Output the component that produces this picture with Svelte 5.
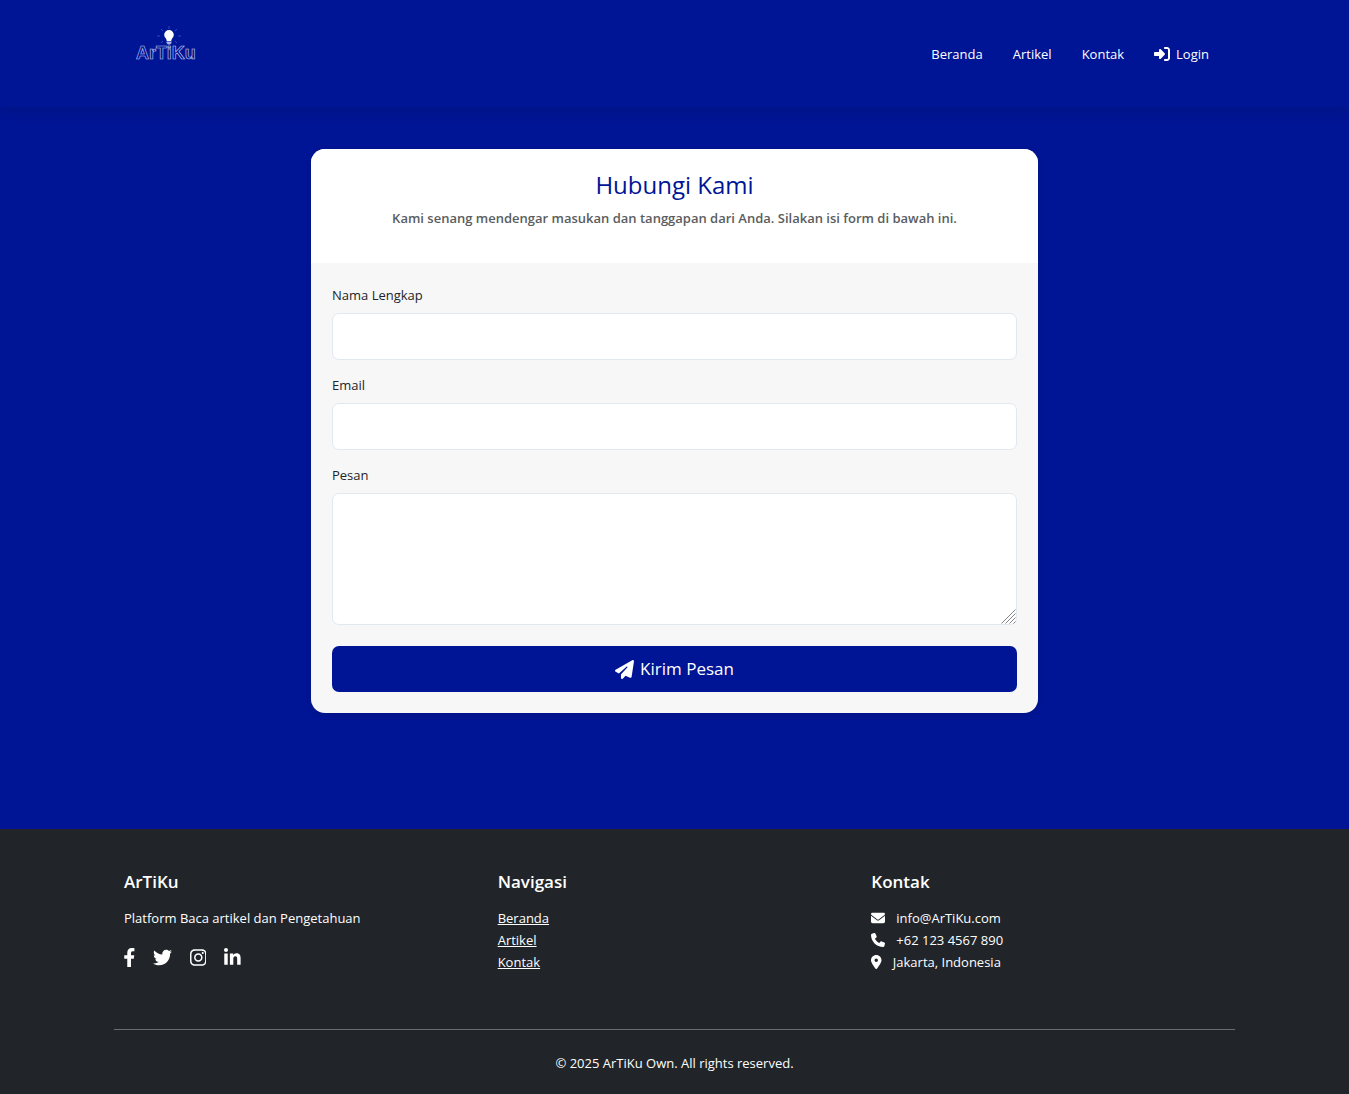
<script>
  const icons = {
    login: { box: '0 0 448 512', d: 'M217.9 105.9L340.7 228.7c7.2 7.2 11.3 17.1 11.3 27.3s-4.1 20.1-11.3 27.3L217.9 406.1c-6.4 6.4-15 9.900-24 9.900c-18.700 0-33.900-15.200-33.900-33.900l0-62.100L32 320c-17.700 0-32-14.300-32-32l0-64c0-17.700 14.300-32 32-32l128 0 0-62.100c0-18.700 15.200-33.900 33.900-33.900c9 0 17.600 3.600 24 9.900zM352 416l64 0c17.700 0 32-14.300 32-32l0-256c0-17.700-14.300-32-32-32l-64 0c-17.700 0-32-14.300-32-32s14.300-32 32-32l64 0c53 0 96 43 96 96l0 256c0 53-43 96-96 96l-64 0c-17.700 0-32-14.300-32-32s14.300-32 32-32z' },
    plane: { box: '0 0 512 512', d: 'M498.1 5.6c10.1 7 15.4 19.1 13.5 31.2l-64 416c-1.5 9.7-7.4 18.2-16 23s-18.9 5.4-28 1.6L284 427.7l-68.5 74.1c-8.9 9.7-22.9 12.9-35.2 8.1S160 493.2 160 480V396.4c0-4 1.5-7.8 4.2-10.7L331.8 202.8c5.8-6.3 5.6-16-.4-22s-15.7-6.4-22-.7L106 360.8 17.7 316.6C7.1 311.3 .3 300.7 0 288.9s5.9-22.8 16.1-28.7l448-256c10.7-6.1 23.9-5.5 34 1.4z' },
    envelope: { box: '0 0 512 512', d: 'M48 64C21.500 64 0 85.500 0 112c0 15.100 7.100 29.300 19.200 38.400L236.800 313.600c11.400 8.500 27 8.500 38.400 0L492.800 150.400c12.100-9.100 19.200-23.300 19.200-38.400c0-26.500-21.500-48-48-48L48 64zM0 176L0 384c0 35.300 28.700 64 64 64l384 0c35.300 0 64-28.700 64-64l0-208L294.400 339.200c-22.800 17.100-54 17.100-76.800 0L0 176z' },
    phone: { box: '0 0 512 512', d: 'M164.9 24.6c-7.700-18.600-28-28.500-47.400-23.200l-88 24C12.100 30.200 0 46 0 64C0 311.400 200.600 512 448 512c18 0 33.800-12.100 38.600-29.500l24-88c5.300-19.400-4.600-39.700-23.200-47.400l-96-40c-16.300-6.800-35.200-2.100-46.300 11.600L304.700 368C234.300 334.700 177.300 277.700 144 207.300L193.300 167c13.700-11.200 18.400-30 11.600-46.300l-40-96z' },
    pin: { box: '0 0 384 512', d: 'M215.7 499.200C267 435 384 279.400 384 192C384 86 298 0 192 0S0 86 0 192c0 87.400 117 243 168.300 307.200c12.300 15.300 35.100 15.300 47.400 0zM192 128a64 64 0 1 1 0 128 64 64 0 1 1 0-128z' }
  };

  const social = [
    { name: 'Facebook', box: '16 0 288 512', d: 'M279.14 288l14.22-92.66h-88.91v-60.13c0-25.35 12.42-50.06 52.24-50.06h40.42V6.26S260.43 0 225.36 0c-73.22 0-121.08 44.38-121.08 124.72v70.62H22.89V288h81.39v224h100.170V288z' },
    { name: 'Twitter', box: '0 0 512 512', d: 'M459.370 151.716c.325 4.548.325 9.097.325 13.645 0 138.720-105.583 298.558-298.558 298.558-59.452 0-114.680-17.219-161.137-47.106 8.447.974 16.568 1.299 25.340 1.299 49.055 0 94.213-16.568 130.274-44.832-46.132-.975-84.792-31.188-98.112-72.772 6.498.974 12.995 1.624 19.818 1.624 9.421 0 18.843-1.300 27.614-3.573-48.081-9.747-84.143-51.980-84.143-102.985v-1.299c13.969 7.797 30.214 12.670 47.431 13.319-28.264-18.843-46.781-51.005-46.781-87.391 0-19.492 5.197-37.360 14.294-52.954 51.655 63.675 129.300 105.258 216.365 109.807-1.624-7.797-2.599-15.918-2.599-24.040 0-57.828 46.782-104.934 104.934-104.934 30.213 0 57.502 12.670 76.670 33.137 23.715-4.548 46.456-13.320 66.599-25.340-7.798 24.366-24.366 44.833-46.132 57.827 21.117-2.273 41.584-8.122 60.426-16.243-14.292 20.791-32.161 39.308-52.628 54.253z' },
    { name: 'Instagram', box: '0 0 448 512', d: 'M224.100 141c-63.600 0-114.900 51.300-114.900 114.900s51.300 114.900 114.900 114.900S339 319.500 339 255.900 287.700 141 224.100 141zm0 189.600c-41.100 0-74.700-33.500-74.700-74.700s33.500-74.700 74.700-74.700 74.700 33.500 74.700 74.700-33.600 74.700-74.700 74.700zm146.400-194.300c0 14.900-12 26.800-26.800 26.800-14.900 0-26.800-12-26.800-26.800s12-26.800 26.800-26.800 26.800 12 26.800 26.800zm76.100 27.200c-1.700-35.900-9.900-67.700-36.200-93.900-26.200-26.200-58-34.400-93.900-36.200-37-2.100-147.900-2.100-184.900 0-35.800 1.700-67.600 9.900-93.900 36.100s-34.400 58-36.200 93.900c-2.100 37-2.100 147.900 0 184.900 1.700 35.900 9.900 67.700 36.200 93.900s58 34.400 93.900 36.200c37 2.100 147.900 2.100 184.900 0 35.900-1.700 67.700-9.900 93.900-36.200 26.200-26.200 34.400-58 36.200-93.900 2.100-37 2.100-147.800 0-184.800zM398.800 388c-7.800 19.600-22.900 34.700-42.600 42.600-29.500 11.700-99.500 9-132.100 9s-102.700 2.600-132.100-9c-19.600-7.800-34.700-22.900-42.600-42.600-11.700-29.500-9-99.500-9-132.100s-2.600-102.700 9-132.100c7.800-19.600 22.900-34.700 42.600-42.600 29.500-11.700 99.500-9 132.100-9s102.700-2.600 132.100 9c19.600 7.800 34.700 22.900 42.600 42.600 11.700 29.500 9 99.500 9 132.100s2.700 102.700-9 132.100z' },
    { name: 'LinkedIn', box: '0 0 448 512', d: 'M100.280 448H7.400V148.900h92.880zM53.790 108.100C24.090 108.100 0 83.500 0 53.800a53.790 53.790 0 0 1 107.580 0c0 29.700-24.100 54.300-53.790 54.300zM447.900 448h-92.680V302.400c0-34.700-.7-79.200-48.290-79.200-48.290 0-55.690 37.700-55.690 76.700V448h-92.780V148.900h89.080v40.800h1.300c12.400-23.500 42.690-48.300 87.880-48.300 94 0 111.280 61.900 111.280 142.300V448z' }
  ];

  const links = ['Beranda', 'Artikel', 'Kontak'];
  const contacts = [
    { icon: 'envelope', text: 'info@ArTiKu.com' },
    { icon: 'phone', text: '+62 123 4567 890' },
    { icon: 'pin', text: 'Jakarta, Indonesia' }
  ];
</script>

{#snippet glyph(icon)}
  <svg class="icon" viewBox={icon.box} aria-hidden="true"><path d={icon.d} /></svg>
{/snippet}

<header>
  <div class="container bar">
    <a class="brand" href="#beranda" aria-label="ArTiKu">
      <svg viewBox="0 0 64 38" aria-hidden="true">
        <g class="rays">
          <path d="M36 3V0M30 5l-2-2M42 5l2-2M27 10h-3M45 10h3M30 15l-2 2M42 15l2 2" />
        </g>
        <path class="bulb" d="M36 4a4.800 4.800 0 0 0-4.800 4.800c0 2 1.200 3 2 4.300l.6 2h4.400l.6-2c.8-1.300 2-2.300 2-4.300A4.800 4.800 0 0 0 36 4z" />
        <path class="base" d="M33.500 15.500h5v1.500l-1.500 1.500h-2l-1.500-1.500z" />
        <text x="3" y="33">ArTiKu</text>
      </svg>
    </a>
    <nav aria-label="Utama">
      {#each links as link}
        <a href={`#${link.toLowerCase()}`}>{link}</a>
      {/each}
      <a class="login" href="#login">{@render glyph(icons.login)}Login</a>
    </nav>
  </div>
</header>

<main>
  <section class="card">
    <div class="card-head">
      <h1>Hubungi Kami</h1>
      <p>Kami senang mendengar masukan dan tanggapan dari Anda. Silakan isi form di bawah ini.</p>
    </div>
    <form onsubmit={(e) => e.preventDefault()}>
      <div class="field">
        <label for="name">Nama Lengkap</label>
        <input id="name" type="text" />
      </div>
      <div class="field">
        <label for="email">Email</label>
        <input id="email" type="email" />
      </div>
      <div class="field">
        <label for="message">Pesan</label>
        <div class="area">
          <textarea id="message"></textarea>
          <svg class="grip" viewBox="0 0 15 15" aria-hidden="true">
            <path d="M.5 14.500l14-14M4.500 14.500l10-10M8.500 14.500l6-6M12.500 14.500l2-2" />
          </svg>
        </div>
      </div>
      <button type="submit">{@render glyph(icons.plane)}Kirim Pesan</button>
    </form>
  </section>
</main>

<footer>
  <div class="container">
    <div class="columns">
      <div>
        <h2>ArTiKu</h2>
        <p>Platform Baca artikel dan Pengetahuan</p>
        <div class="social">
          {#each social as item}
            <a href={`#${item.name.toLowerCase()}`} aria-label={item.name}>{@render glyph(item)}</a>
          {/each}
        </div>
      </div>
      <div>
        <h2>Navigasi</h2>
        <ul>
          {#each links as link}
            <li><a href={`#${link.toLowerCase()}`}>{link}</a></li>
          {/each}
        </ul>
      </div>
      <div>
        <h2>Kontak</h2>
        <ul>
          {#each contacts as item}
            <li class="contact">{@render glyph(icons[item.icon])}{item.text}</li>
          {/each}
        </ul>
      </div>
    </div>
    <p class="copyright">© 2025 ArTiKu Own. All rights reserved.</p>
  </div>
</footer>

<style>
  :global(body) {
    background: #001595;
    color: #212529;
    font-family: 'Segoe UI', 'Open Sans', 'Noto Sans', sans-serif;
    font-size: 13px;
    line-height: 22px;
  }
  :global(#app) {
    display: flex;
    flex-direction: column;
    min-height: 100vh;
  }
  h1, h2, p, ul { margin: 0; padding: 0; }
  ul { list-style: none; }
  .container {
    box-sizing: border-box;
    width: 100%;
    max-width: 1121px;
    margin: 0 auto;
  }
  .icon {
    display: block;
    height: 14px;
    fill: currentColor;
  }

  header {
    background: #001595;
    box-shadow: 0 2px 14px rgba(0, 0, 0, 0.15);
  }
  .bar {
    display: flex;
    justify-content: space-between;
    min-height: 107px;
    padding: 0 26px 0 19px;
  }
  .brand {
    align-self: flex-start;
    padding-top: 26px;
  }
  .brand svg {
    display: block;
    width: 64px;
    height: 38px;
    overflow: visible;
  }
  .rays { stroke: #5566c0; stroke-width: 0.6; fill: none; }
  .bulb { fill: #ffffff; }
  .base { fill: #a5b4ea; }
  .brand text {
    font: 700 18px 'Liberation Sans', Arial, sans-serif;
    fill: none;
    stroke: #c3cbee;
    stroke-width: 0.6;
  }
  nav {
    display: flex;
    align-items: center;
    gap: 30px;
  }
  nav a {
    color: #ffffff;
    text-decoration: none;
  }
  .login {
    display: flex;
    align-items: center;
    gap: 8px;
  }
  .login .icon {
    width: 14px;
    height: 16px;
    overflow: visible;
  }

  main {
    flex: 1;
    padding: 42px 16px 116px;
  }
  .card {
    max-width: 727px;
    margin: 0 auto;
    overflow: hidden;
    border-radius: 14px;
    background: #f7f7f7;
    box-shadow: 0 2px 7px rgba(0, 0, 0, 0.1);
  }
  .card-head {
    padding: 20px 21px 34px;
    background: #ffffff;
    text-align: center;
  }
  h1 {
    margin-bottom: 6px;
    color: #001595;
    font-size: 24px;
    font-weight: 400;
    line-height: 32px;
  }
  .card-head p {
    color: #5a5d60;
    font-weight: 600;
  }
  form { padding: 21px; }
  .field { margin-bottom: 14px; }
  label {
    display: block;
    margin-bottom: 7px;
  }
  input, textarea {
    display: block;
    box-sizing: border-box;
    width: 100%;
    height: 47px;
    padding: 10px 14px;
    border: 1px solid #e2e8f0;
    border-radius: 7px;
    background: #ffffff;
    font: inherit;
  }
  .area {
    position: relative;
    margin-bottom: 21px;
  }
  textarea {
    height: 132px;
    resize: vertical;
  }
  textarea::-webkit-resizer { background: transparent; }
  .grip {
    position: absolute;
    right: 1px;
    bottom: 1px;
    width: 15px;
    height: 15px;
    fill: none;
    stroke: #85858a;
    stroke-width: 1;
    pointer-events: none;
  }
  button {
    display: flex;
    align-items: center;
    justify-content: center;
    gap: 6px;
    width: 100%;
    height: 46px;
    border: 0;
    border-radius: 7px;
    background: #001595;
    color: #ffffff;
    font: inherit;
    font-size: 17px;
  }
  button .icon { height: 19px; }

  footer {
    padding: 41px 16px 20px;
    background: #212529;
    color: #ffffff;
  }
  .columns {
    display: grid;
    grid-template-columns: repeat(3, 1fr);
    min-height: 159px;
    border-bottom: 1px solid #6b6e71;
  }
  .columns > div { padding: 0 10px; }
  h2 {
    margin-bottom: 13px;
    font-size: 17px;
    font-weight: 600;
    line-height: 24px;
  }
  footer a { color: #ffffff; }
  .social {
    display: flex;
    gap: 18px;
    margin-top: 19px;
  }
  .social .icon { height: 19px; }
  .contact {
    display: flex;
    align-items: center;
    gap: 11px;
  }
  .copyright {
    padding-top: 22px;
    text-align: center;
  }
</style>
